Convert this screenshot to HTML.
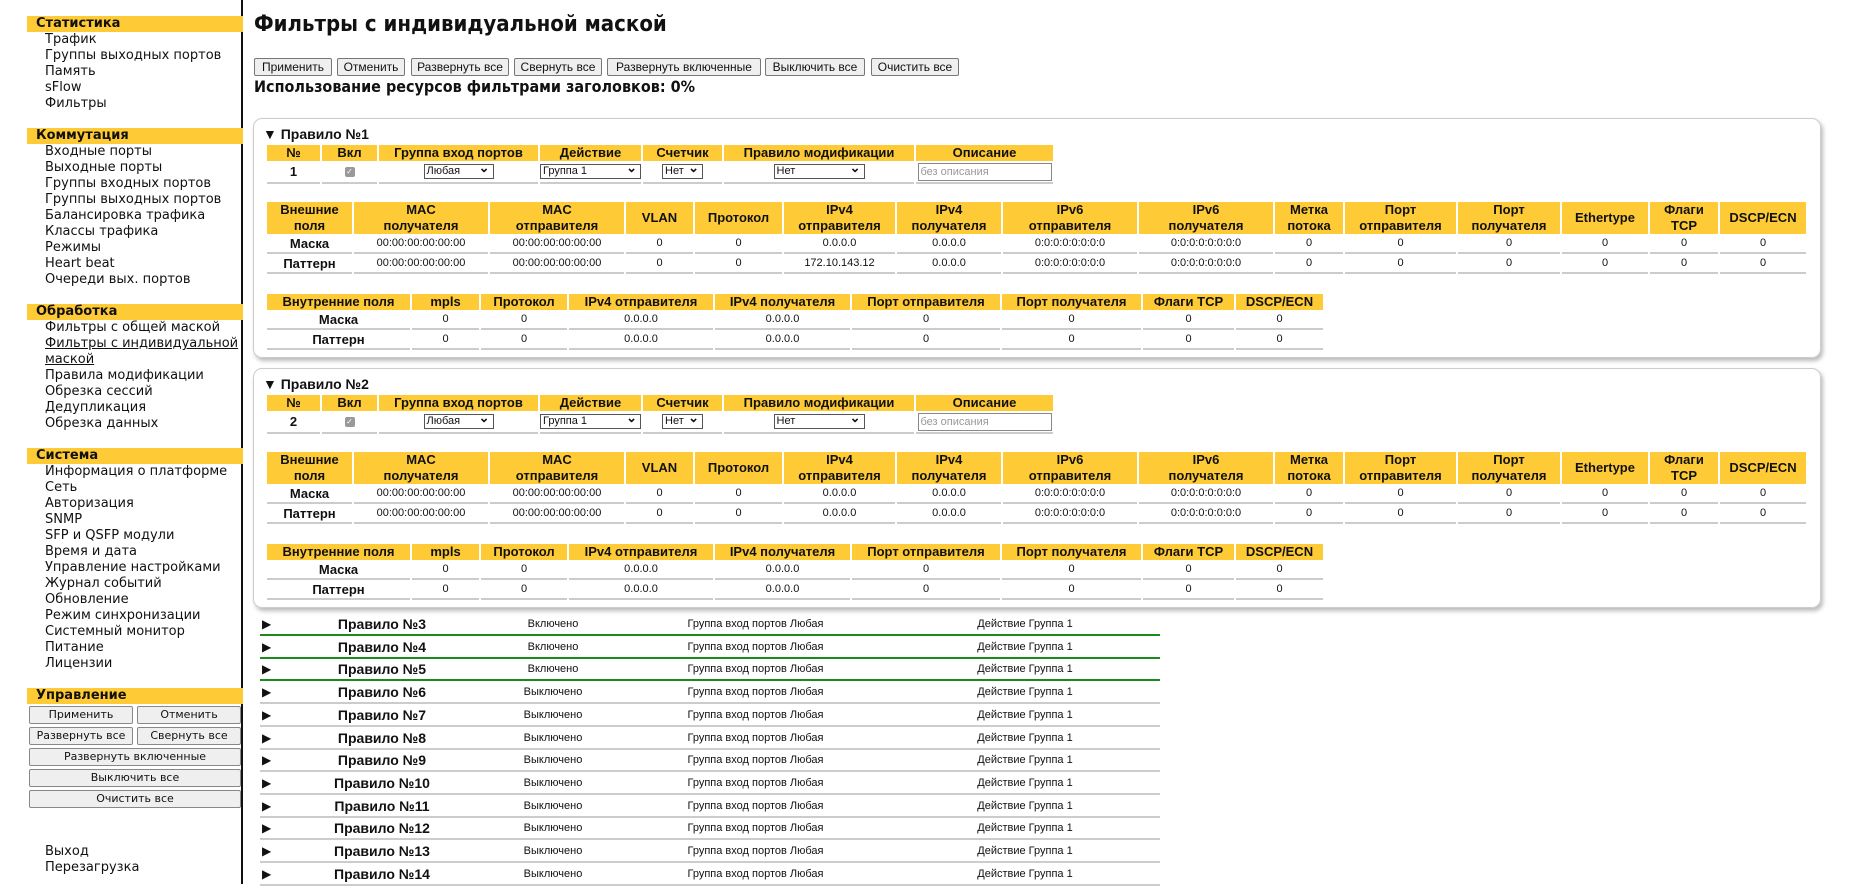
<!DOCTYPE html>
<html><head><meta charset="utf-8">
<style>
*{box-sizing:border-box;margin:0;padding:0}
body{width:1867px;height:884px;overflow:hidden;background:#fff;font-family:"Liberation Sans Narrow","Liberation Sans",sans-serif;color:#111;position:relative}
.sb{position:absolute;left:0;top:0;width:243px;height:884px;border-right:2px solid #111;font-family:"DejaVu Sans","Liberation Sans",sans-serif;font-size:13px}
.sh{position:absolute;left:27px;width:216px;height:16px;background:#fecb37;font-weight:bold;padding-left:9px;line-height:16px;font-size:13px}
.si{position:absolute;left:45px;line-height:16px;white-space:nowrap}
.sbt{position:absolute;height:18px;border:1px solid #888;border-radius:2px;background:#efefef;font-size:11px;text-align:center;line-height:16px}
.a{position:absolute;white-space:nowrap}
.btn{position:absolute;top:58px;height:18px;border:1px solid #777;border-radius:2px;background:#efefef;font-size:12px;text-align:center;line-height:16px}
.panel{position:absolute;left:253px;width:1568px;height:240px;border:1px solid #ccc;border-radius:9px;box-shadow:2px 3px 4px #bbb}
table{position:absolute;border-collapse:separate;border-spacing:2px 0;table-layout:fixed}
th{background:#fecb37;font-weight:bold;font-size:13px;line-height:16px;text-align:center;padding:0;overflow:hidden;white-space:nowrap}
td{font-size:11px;text-align:center;border-bottom:2px solid #ccc;height:20px;padding:0;white-space:nowrap;overflow:hidden}
td.b{font-weight:bold;font-size:13px}
.sel{display:inline-block;height:15px;border:1px solid #555;font-size:11px;text-align:left;padding-left:2px;line-height:13px;position:relative;vertical-align:middle;background:#fff}
.sel:after{content:"⌄";position:absolute;right:3px;top:-4px;font-size:13px;font-weight:bold}
.cb{display:inline-block;width:10px;height:10px;background:#999;border-radius:2px;color:#fff;font-size:8px;line-height:10px;vertical-align:middle}
.inp{display:inline-block;width:134px;height:18px;border:1px solid #888;font-size:11px;color:#999;text-align:left;padding-left:2px;line-height:16px;vertical-align:middle}
.rw{position:absolute;left:260px;height:23px;width:900px;font-size:11px}
.rw div{position:absolute;top:0;height:23px;line-height:22px;text-align:center;border-bottom:2px solid #ccc}
.rw.g div{border-bottom-color:#1a8a1a}
</style></head><body>
<div class="sb">
<div class="sh" style="top:16px">Статистика</div>
<div class="si" style="top:32px">Трафик<br>Группы выходных портов<br>Память<br>sFlow<br>Фильтры</div>
<div class="sh" style="top:128px">Коммутация</div>
<div class="si" style="top:144px">Входные порты<br>Выходные порты<br>Группы входных портов<br>Группы выходных портов<br>Балансировка трафика<br>Классы трафика<br>Режимы<br>Heart beat<br>Очереди вых. портов</div>
<div class="sh" style="top:304px">Обработка</div>
<div class="si" style="top:320px">Фильтры с общей маской<br><u>Фильтры с индивидуальной<br>маской</u><br>Правила модификации<br>Обрезка сессий<br>Дедупликация<br>Обрезка данных</div>
<div class="sh" style="top:448px">Система</div>
<div class="si" style="top:464px">Информация о платформе<br>Сеть<br>Авторизация<br>SNMP<br>SFP и QSFP модули<br>Время и дата<br>Управление настройками<br>Журнал событий<br>Обновление<br>Режим синхронизации<br>Системный монитор<br>Питание<br>Лицензии</div>
<div class="sh" style="top:688px">Управление</div>
<div class="sbt" style="left:29px;top:706px;width:104px">Применить</div>
<div class="sbt" style="left:137px;top:706px;width:104px">Отменить</div>
<div class="sbt" style="left:29px;top:727px;width:104px">Развернуть все</div>
<div class="sbt" style="left:137px;top:727px;width:104px">Свернуть все</div>
<div class="sbt" style="left:29px;top:748px;width:212px">Развернуть включенные</div>
<div class="sbt" style="left:29px;top:769px;width:212px">Выключить все</div>
<div class="sbt" style="left:29px;top:790px;width:212px">Очистить все</div>
<div class="si" style="top:844px">Выход<br>Перезагрузка</div>
</div>

<div class="a" style="left:254px;top:12px;font-size:22px;font-weight:bold;font-family:'DejaVu Sans Condensed','Liberation Sans Narrow','Liberation Sans',sans-serif">Фильтры с индивидуальной маской</div>
<div class="btn" style="left:254px;width:78px">Применить</div>
<div class="btn" style="left:337px;width:68px">Отменить</div>
<div class="btn" style="left:411px;width:98px">Развернуть все</div>
<div class="btn" style="left:514px;width:88px">Свернуть все</div>
<div class="btn" style="left:607px;width:154px">Развернуть включенные</div>
<div class="btn" style="left:765px;width:100px">Выключить все</div>
<div class="btn" style="left:871px;width:88px">Очистить все</div>
<div class="a" style="left:254px;top:77px;font-size:16px;font-weight:bold;font-family:'DejaVu Sans Condensed','Liberation Sans Narrow','Liberation Sans',sans-serif">Использование ресурсов фильтрами заголовков: 0%</div>

<div class="panel" style="top:118px"></div>
<div class="panel" style="top:368px"></div>

<div id="p1"></div>

<script>
function panel(top,n){
 var o=top-118,h='';
 h+='<div class="a" style="left:263px;top:'+(126+o)+'px;font-size:14px;font-weight:bold">▼ Правило №'+n+'</div>';
 var b1=[267,322,379,540,643,724,916,1055];
 var cg='';for(var i=0;i<7;i++)cg+='<col style="width:'+(b1[i+1]-b1[i]-2)+'px">';
 h+='<table style="left:265px;top:'+(145+o)+'px;width:'+(b1[7]-b1[0]+2)+'px"><colgroup>'+cg+'</colgroup><tr><th>№</th><th>Вкл</th><th>Группа вход портов</th><th>Действие</th><th>Счетчик</th><th>Правило модификации</th><th>Описание</th></tr>';
 h+='<tr><td class="b" style="height:23px">'+n+'</td><td><span class="cb">✓</span></td><td><span class="sel" style="width:70px">Любая</span></td><td><span class="sel" style="width:101px">Группа 1</span></td><td><span class="sel" style="width:41px">Нет</span></td><td><span class="sel" style="width:91px">Нет</span></td><td><span class="inp">без описания</span></td></tr></table>';
 var b2=[267,354,490,626,695,784,897,1003,1139,1275,1345,1458,1562,1650,1720,1808];
 var hd=['Внешние<br>поля','MAC<br>получателя','MAC<br>отправителя','VLAN','Протокол','IPv4<br>отправителя','IPv4<br>получателя','IPv6<br>отправителя','IPv6<br>получателя','Метка<br>потока','Порт<br>отправителя','Порт<br>получателя','Ethertype','Флаги<br>TCP','DSCP/ECN'];
 var m=['Маска','00:00:00:00:00:00','00:00:00:00:00:00','0','0','0.0.0.0','0.0.0.0','0:0:0:0:0:0:0:0','0:0:0:0:0:0:0:0','0','0','0','0','0','0'];
 var p=m.slice();p[0]='Паттерн';if(n==1)p[5]='172.10.143.12';
 h+=tbl(b2,hd,[m,p],202+o,32);
 var b3=[267,412,481,569,715,852,1002,1143,1236,1325];
 var hd3=['Внутренние поля','mpls','Протокол','IPv4 отправителя','IPv4 получателя','Порт отправителя','Порт получателя','Флаги TCP','DSCP/ECN'];
 var m3=['Маска','0','0','0.0.0.0','0.0.0.0','0','0','0','0'];var p3=m3.slice();p3[0]='Паттерн';
 h+=tbl(b3,hd3,[m3,p3],294+o,16);
 return h;
}
function tbl(b,hd,rows,top,hh){
 var cg='';for(var i=0;i<hd.length;i++)cg+='<col style="width:'+(b[i+1]-b[i]-2)+'px">';
 var h='<table style="left:'+(b[0]-2)+'px;top:'+top+'px;width:'+(b[b.length-1]-b[0]+2)+'px"><colgroup>'+cg+'</colgroup><tr>';
 hd.forEach(function(x){h+='<th style="height:'+hh+'px">'+x+'</th>'});h+='</tr>';
 rows.forEach(function(r){h+='<tr>';r.forEach(function(c,i){h+='<td'+(i==0?' class="b"':'')+'>'+c+'</td>'});h+='</tr>'});
 return h+'</table>';
}
var h=panel(118,1)+panel(368,2);
for(var i=3;i<=14;i++){
 var t=613+(i-3)*22.7,en=i<=5;
 h+='<div class="rw'+(en?' g':'')+'" style="top:'+t+'px"><div style="left:0;width:19px;font-size:12px;text-align:left;padding-left:2px">▶</div><div style="left:19px;width:206px;font-weight:bold;font-size:14px">Правило №'+i+'</div><div style="left:225px;width:136px">'+(en?'Включено':'Выключено')+'</div><div style="left:361px;width:269px">Группа вход портов Любая</div><div style="left:630px;width:270px">Действие Группа 1</div></div>';
}
document.getElementById('p1').innerHTML=h;
</script>
</body></html>
